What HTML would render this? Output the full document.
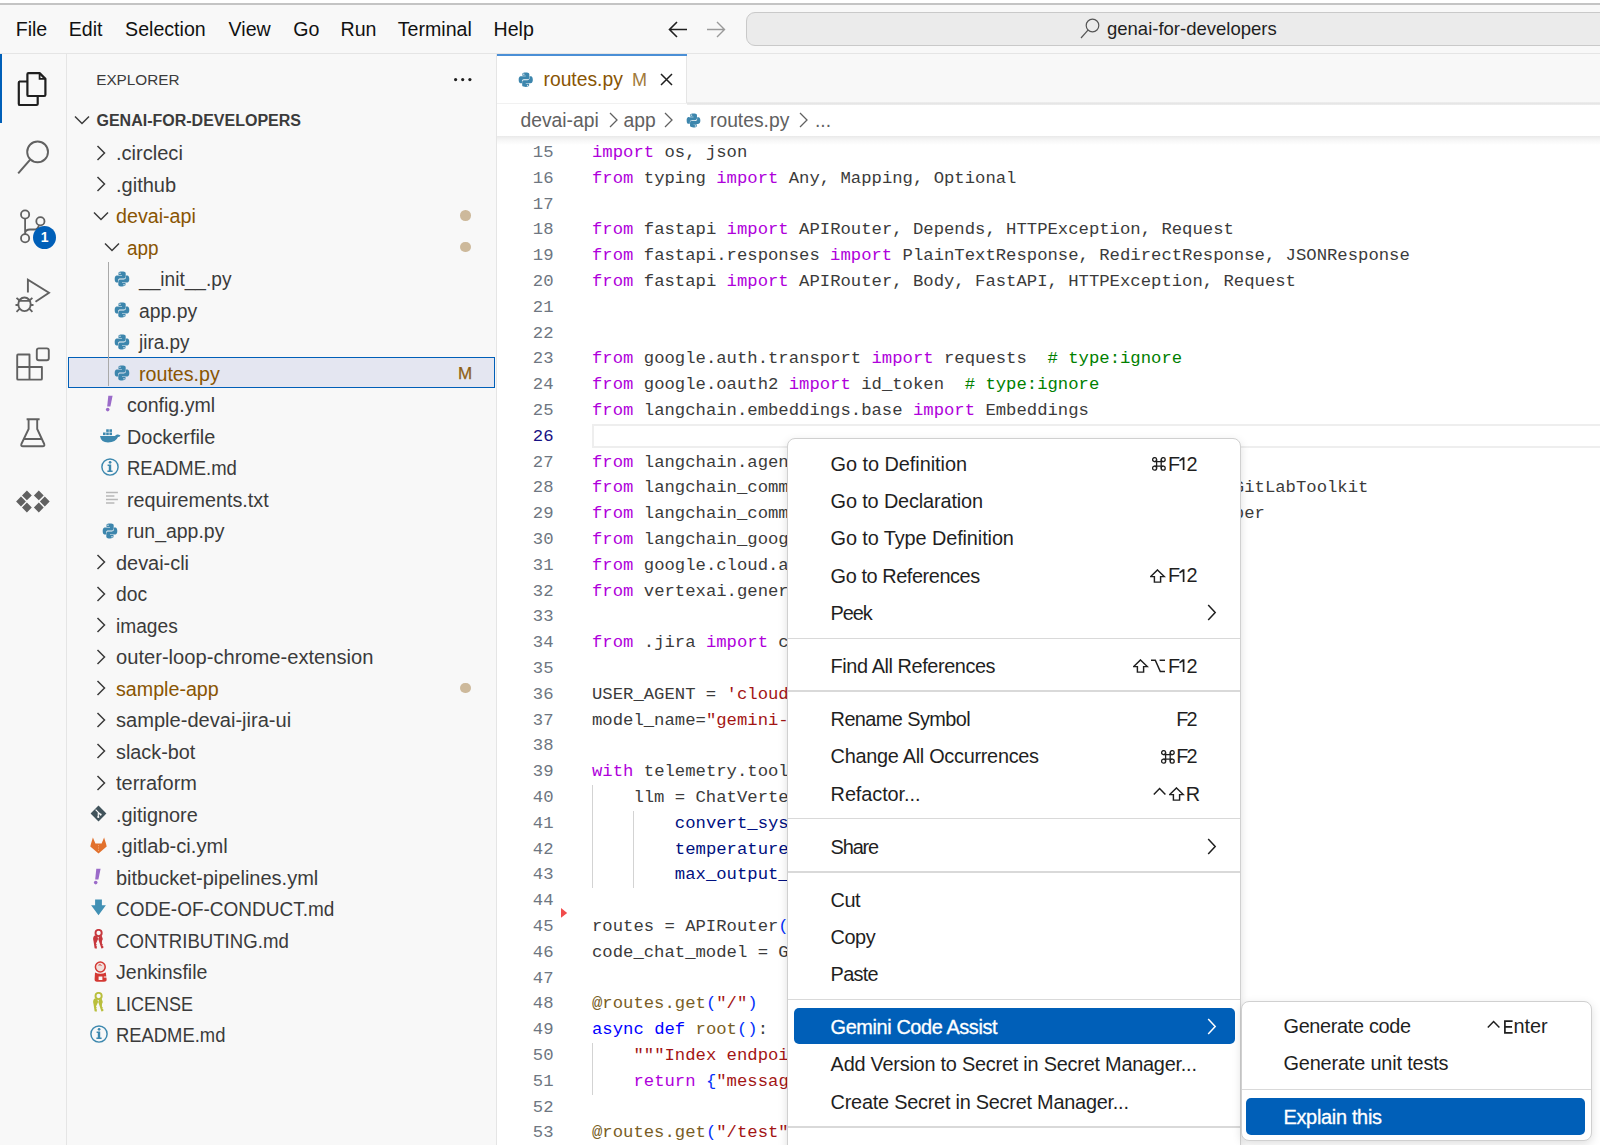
<!DOCTYPE html><html><head><meta charset="utf-8"><style>
html,body{margin:0;padding:0;width:1600px;height:1145px;overflow:hidden;background:#f8f8f8;position:relative}
div,svg{box-sizing:border-box}
</style></head><body>
<div style="position:absolute;left:0;top:0;width:1600px;height:3px;background:#ffffff"></div>
<div style="position:absolute;left:0;top:3px;width:1600px;height:1.5px;background:#c4c4c4"></div>
<div style="position:absolute;left:0;top:53px;width:1600px;height:1px;background:#e5e5e5"></div>
<div style="position:absolute;left:15.7px;top:19.71px;font-family:'Liberation Sans', sans-serif;font-size:19.6px;line-height:1;height:19.6px;color:#111111;font-weight:normal;letter-spacing:0px;white-space:pre;">File</div>
<div style="position:absolute;left:68.7px;top:19.71px;font-family:'Liberation Sans', sans-serif;font-size:19.6px;line-height:1;height:19.6px;color:#111111;font-weight:normal;letter-spacing:0px;white-space:pre;">Edit</div>
<div style="position:absolute;left:125.10000000000001px;top:19.71px;font-family:'Liberation Sans', sans-serif;font-size:19.6px;line-height:1;height:19.6px;color:#111111;font-weight:normal;letter-spacing:0px;white-space:pre;">Selection</div>
<div style="position:absolute;left:228.6px;top:19.71px;font-family:'Liberation Sans', sans-serif;font-size:19.6px;line-height:1;height:19.6px;color:#111111;font-weight:normal;letter-spacing:0px;white-space:pre;">View</div>
<div style="position:absolute;left:293.2px;top:19.71px;font-family:'Liberation Sans', sans-serif;font-size:19.6px;line-height:1;height:19.6px;color:#111111;font-weight:normal;letter-spacing:0px;white-space:pre;">Go</div>
<div style="position:absolute;left:340.5px;top:19.71px;font-family:'Liberation Sans', sans-serif;font-size:19.6px;line-height:1;height:19.6px;color:#111111;font-weight:normal;letter-spacing:0px;white-space:pre;">Run</div>
<div style="position:absolute;left:397.8px;top:19.71px;font-family:'Liberation Sans', sans-serif;font-size:19.6px;line-height:1;height:19.6px;color:#111111;font-weight:normal;letter-spacing:0px;white-space:pre;">Terminal</div>
<div style="position:absolute;left:493.5px;top:19.71px;font-family:'Liberation Sans', sans-serif;font-size:19.6px;line-height:1;height:19.6px;color:#111111;font-weight:normal;letter-spacing:0px;white-space:pre;">Help</div>
<svg style="position:absolute;left:668px;top:21px" width="20" height="17" viewBox="0 0 20 17"><path d="M9 1 L1.5 8.5 L9 16 M1.5 8.5 H19" fill="none" stroke="#1f1f1f" stroke-width="1.6"/></svg>
<svg style="position:absolute;left:706px;top:21px" width="20" height="17" viewBox="0 0 20 17"><path d="M11 1 L18.5 8.5 L11 16 M18.5 8.5 H1" fill="none" stroke="#9a9a9a" stroke-width="1.4"/></svg>
<div style="position:absolute;left:745.5px;top:11.5px;width:900px;height:34.5px;background:#ebebeb;border:1.3px solid #c9c9c9;border-radius:9px"></div>
<svg style="position:absolute;left:1079px;top:17px" width="22" height="22" viewBox="0 0 22 22"><circle cx="13.5" cy="8.5" r="6.3" fill="none" stroke="#555555" stroke-width="1.2"/><path d="M9.2 12.8 L2 21" stroke="#555555" stroke-width="1.2" fill="none"/></svg>
<div style="position:absolute;left:1107px;top:20.34px;font-family:'Liberation Sans', sans-serif;font-size:18.5px;line-height:1;height:18.5px;color:#1f1f1f;font-weight:normal;letter-spacing:0px;white-space:pre;">genai-for-developers</div>
<div style="position:absolute;left:66px;top:54px;width:1px;height:1091px;background:#e5e5e5"></div>
<div style="position:absolute;left:0;top:54px;width:1.6px;height:69px;background:#005fb8"></div>
<svg style="position:absolute;left:0;top:0" width="66" height="540" viewBox="0 0 66 540">
<path d="M19 81.5 H36.5 Q37.7 81.5 37.7 82.7 V104 Q37.7 105 36.5 105 H19.9 Q18.8 105 18.8 103.9 V82.7 Q18.8 81.5 20 81.5" fill="none" stroke="#1f1f1f" stroke-width="2.2"/>
<path d="M28.5 73.1 H39.6 L45.4 78.9 V94.8 Q45.4 96 44.2 96 H28.5 Q27.4 96 27.4 94.9 V74.2 Q27.4 73.1 28.5 73.1 Z" fill="#f8f8f8" stroke="#1f1f1f" stroke-width="2.2" stroke-linejoin="round"/>
<path d="M39.6 73.5 V78.9 H45" fill="none" stroke="#1f1f1f" stroke-width="1.8"/>
<circle cx="37.6" cy="151.9" r="10.4" fill="none" stroke="#616161" stroke-width="1.9"/>
<path d="M30.2 159.6 L18.2 173.3" stroke="#616161" stroke-width="2" fill="none"/>
<circle cx="25.1" cy="214.5" r="4.1" fill="none" stroke="#616161" stroke-width="1.8"/>
<circle cx="40.4" cy="221.2" r="4.1" fill="none" stroke="#616161" stroke-width="1.8"/>
<circle cx="25.1" cy="238.3" r="4.1" fill="none" stroke="#616161" stroke-width="1.8"/>
<path d="M25.1 218.6 V234.2 M25.1 233 Q25.5 229.5 30 229.5 H34 Q38 229.5 39 225.2" fill="none" stroke="#616161" stroke-width="1.8"/>
<path d="M27.9 292.5 V279.6 L49 292.8 L35.5 301.8" fill="none" stroke="#616161" stroke-width="1.9" stroke-linejoin="miter"/>
<ellipse cx="24.5" cy="304.3" rx="6.2" ry="6.8" fill="none" stroke="#616161" stroke-width="1.9"/>
<path d="M18.5 300.8 H30.5 M16.5 297.8 L19.5 300.5 M32.4 297.8 L29.5 300.5 M16.5 311.8 L19.5 308.8 M32.4 311.8 L29.5 308.8 M15.5 305 H18.3 M30.7 305 H33.5" fill="none" stroke="#616161" stroke-width="1.8"/>
<path d="M18 354.5 Q17.2 354.5 17.2 355.5 V378.7 Q17.2 379.6 18.1 379.6 H41 Q41.9 379.6 41.9 378.7 V367 H29.5 V354.5 Z" fill="none" stroke="#616161" stroke-width="1.9" stroke-linejoin="round"/>
<path d="M17.2 367 H29.5 V379.6" fill="none" stroke="#616161" stroke-width="1.9"/>
<rect x="36.8" y="348.4" width="12" height="11.8" rx="2" fill="none" stroke="#616161" stroke-width="1.9"/>
<path d="M26.6 419.2 H39.6 M28.6 419.2 V429 L21.4 444 Q20.6 446.3 23 446.3 H42.6 Q45 446.3 44.2 444 L37.2 429 V419.2 M24.5 439 H41.5" fill="none" stroke="#616161" stroke-width="1.9" stroke-linejoin="round"/>
<path d="M26.9 490.5 L31.799999999999997 495.4 L26.9 500.29999999999995 L22.0 495.4 Z M21 496.6 L25.9 501.5 L21 506.4 L16.1 501.5 Z M26.9 502.6 L31.799999999999997 507.5 L26.9 512.4 L22.0 507.5 Z M38.8 490.5 L43.699999999999996 495.4 L38.8 500.29999999999995 L33.9 495.4 Z M44.8 496.6 L49.699999999999996 501.5 L44.8 506.4 L39.9 501.5 Z M38.8 502.6 L43.699999999999996 507.5 L38.8 512.4 L33.9 507.5 Z " fill="#616161"/>
</svg>
<div style="position:absolute;left:33.1px;top:226.1px;width:23.2px;height:23.2px;border-radius:50%;background:#005fb8;color:#fff;font-family:'Liberation Sans', sans-serif;font-weight:bold;font-size:14px;line-height:23.2px;text-align:center">1</div>
<div style="position:absolute;left:496px;top:54px;width:1px;height:1091px;background:#e5e5e5"></div>
<div style="position:absolute;left:96.2px;top:71.65px;font-family:'Liberation Sans', sans-serif;font-size:15.3px;line-height:1;height:15.3px;color:#3b3b3b;font-weight:normal;letter-spacing:0px;white-space:pre;">EXPLORER</div>
<svg style="position:absolute;left:450px;top:74px" width="26" height="12" viewBox="0 0 26 12"><circle cx="5.6" cy="5.6" r="1.6" fill="#1f1f1f"/><circle cx="12.7" cy="5.6" r="1.6" fill="#1f1f1f"/><circle cx="19.9" cy="5.6" r="1.6" fill="#1f1f1f"/></svg>
<svg style="position:absolute;left:74px;top:115px" width="16" height="10" viewBox="0 0 16 10"><path d="M1 1.5 L8 8.5 L15 1.5" fill="none" stroke="#3b3b3b" stroke-width="1.5"/></svg>
<div style="position:absolute;left:96.5px;top:112.66px;font-family:'Liberation Sans', sans-serif;font-size:16px;line-height:1;height:16px;color:#3b3b3b;font-weight:bold;letter-spacing:0px;white-space:pre;">GENAI-FOR-DEVELOPERS</div>
<div style="position:absolute;left:67.5px;top:357.2px;width:427.5px;height:30.8px;background:#e4e6f1;border:1.3px solid #005fb8"></div>
<div style="position:absolute;left:108px;top:262.4px;width:1px;height:124px;background:#a9a9a9"></div>
<svg style="position:absolute;left:96.0px;top:144.6px" width="11" height="16" viewBox="0 0 11 16"><path d="M1.5 1 L8.5 8 L1.5 15" fill="none" stroke="#3b3b3b" stroke-width="1.5"/></svg>
<div style="position:absolute;left:115.99787279913762px;top:143.22px;font-family:'Liberation Sans', sans-serif;font-size:20.0px;line-height:1;height:20.0px;color:#3b3b3b;font-weight:normal;letter-spacing:0px;white-space:pre;transform:scaleX(1.0027);transform-origin:0 0;">.circleci</div>
<svg style="position:absolute;left:96.0px;top:176.1px" width="11" height="16" viewBox="0 0 11 16"><path d="M1.5 1 L8.5 8 L1.5 15" fill="none" stroke="#3b3b3b" stroke-width="1.5"/></svg>
<div style="position:absolute;left:115.99899237653298px;top:174.72px;font-family:'Liberation Sans', sans-serif;font-size:20.0px;line-height:1;height:20.0px;color:#3b3b3b;font-weight:normal;letter-spacing:0px;white-space:pre;transform:scaleX(1.0013);transform-origin:0 0;">.github</div>
<svg style="position:absolute;left:92.5px;top:210.6px" width="16" height="10" viewBox="0 0 16 10"><path d="M1 1.5 L8 8.5 L15 1.5" fill="none" stroke="#3b3b3b" stroke-width="1.5"/></svg>
<div style="position:absolute;left:116.01307007355787px;top:206.22px;font-family:'Liberation Sans', sans-serif;font-size:20.0px;line-height:1;height:20.0px;color:#895503;font-weight:normal;letter-spacing:0px;white-space:pre;transform:scaleX(0.9837);transform-origin:0 0;">devai-api</div>
<div style="position:absolute;left:460.3px;top:210.2px;width:10.6px;height:10.6px;border-radius:50%;background:#cdb99b"></div>
<svg style="position:absolute;left:104.1px;top:242.1px" width="16" height="10" viewBox="0 0 16 10"><path d="M1 1.5 L8 8.5 L15 1.5" fill="none" stroke="#3b3b3b" stroke-width="1.5"/></svg>
<div style="position:absolute;left:127.44442251204323px;top:237.72px;font-family:'Liberation Sans', sans-serif;font-size:20.0px;line-height:1;height:20.0px;color:#895503;font-weight:normal;letter-spacing:0px;white-space:pre;transform:scaleX(0.9445);transform-origin:0 0;">app</div>
<div style="position:absolute;left:460.3px;top:241.8px;width:10.6px;height:10.6px;border-radius:50%;background:#cdb99b"></div>
<div style="position:absolute;left:113.5px;top:270.6px"><svg width="16" height="16" viewBox="0 0 16 16"><path d="M7.9 0.6 C4.2 0.6 4.5 2.2 4.5 2.2 V3.9 H8 V4.4 H3.1 C3.1 4.4 0.7 4.1 0.7 7.9 C0.7 11.7 2.8 11.5 2.8 11.5 H4.1 V9.7 C4.1 9.7 4 7.6 6.2 7.6 H9.7 C9.7 7.6 11.7 7.7 11.7 5.6 V2.3 C11.7 2.3 12 0.6 7.9 0.6 Z M6 1.6 A0.65 0.65 0 1 1 6 2.9 A0.65 0.65 0 1 1 6 1.6 Z" fill="#3d86ad"/><path d="M8.1 15.4 C11.8 15.4 11.5 13.8 11.5 13.8 V12.1 H8 V11.6 H12.9 C12.9 11.6 15.3 11.9 15.3 8.1 C15.3 4.3 13.2 4.5 13.2 4.5 H11.9 V6.3 C11.9 6.3 12 8.4 9.8 8.4 H6.3 C6.3 8.4 4.3 8.3 4.3 10.4 V13.7 C4.3 13.7 4 15.4 8.1 15.4 Z M10 14.4 A0.65 0.65 0 1 1 10 13.1 A0.65 0.65 0 1 1 10 14.4 Z" fill="#3d86ad"/></svg></div>
<div style="position:absolute;left:138.63550937212742px;top:269.22px;font-family:'Liberation Sans', sans-serif;font-size:20.0px;line-height:1;height:20.0px;color:#3b3b3b;font-weight:normal;letter-spacing:0px;white-space:pre;transform:scaleX(0.9556);transform-origin:0 0;">__init__.py</div>
<div style="position:absolute;left:113.5px;top:302.1px"><svg width="16" height="16" viewBox="0 0 16 16"><path d="M7.9 0.6 C4.2 0.6 4.5 2.2 4.5 2.2 V3.9 H8 V4.4 H3.1 C3.1 4.4 0.7 4.1 0.7 7.9 C0.7 11.7 2.8 11.5 2.8 11.5 H4.1 V9.7 C4.1 9.7 4 7.6 6.2 7.6 H9.7 C9.7 7.6 11.7 7.7 11.7 5.6 V2.3 C11.7 2.3 12 0.6 7.9 0.6 Z M6 1.6 A0.65 0.65 0 1 1 6 2.9 A0.65 0.65 0 1 1 6 1.6 Z" fill="#3d86ad"/><path d="M8.1 15.4 C11.8 15.4 11.5 13.8 11.5 13.8 V12.1 H8 V11.6 H12.9 C12.9 11.6 15.3 11.9 15.3 8.1 C15.3 4.3 13.2 4.5 13.2 4.5 H11.9 V6.3 C11.9 6.3 12 8.4 9.8 8.4 H6.3 C6.3 8.4 4.3 8.3 4.3 10.4 V13.7 C4.3 13.7 4 15.4 8.1 15.4 Z M10 14.4 A0.65 0.65 0 1 1 10 13.1 A0.65 0.65 0 1 1 10 14.4 Z" fill="#3d86ad"/></svg></div>
<div style="position:absolute;left:138.62596324605627px;top:300.72px;font-family:'Liberation Sans', sans-serif;font-size:20.0px;line-height:1;height:20.0px;color:#3b3b3b;font-weight:normal;letter-spacing:0px;white-space:pre;transform:scaleX(0.9675);transform-origin:0 0;">app.py</div>
<div style="position:absolute;left:113.5px;top:333.6px"><svg width="16" height="16" viewBox="0 0 16 16"><path d="M7.9 0.6 C4.2 0.6 4.5 2.2 4.5 2.2 V3.9 H8 V4.4 H3.1 C3.1 4.4 0.7 4.1 0.7 7.9 C0.7 11.7 2.8 11.5 2.8 11.5 H4.1 V9.7 C4.1 9.7 4 7.6 6.2 7.6 H9.7 C9.7 7.6 11.7 7.7 11.7 5.6 V2.3 C11.7 2.3 12 0.6 7.9 0.6 Z M6 1.6 A0.65 0.65 0 1 1 6 2.9 A0.65 0.65 0 1 1 6 1.6 Z" fill="#3d86ad"/><path d="M8.1 15.4 C11.8 15.4 11.5 13.8 11.5 13.8 V12.1 H8 V11.6 H12.9 C12.9 11.6 15.3 11.9 15.3 8.1 C15.3 4.3 13.2 4.5 13.2 4.5 H11.9 V6.3 C11.9 6.3 12 8.4 9.8 8.4 H6.3 C6.3 8.4 4.3 8.3 4.3 10.4 V13.7 C4.3 13.7 4 15.4 8.1 15.4 Z M10 14.4 A0.65 0.65 0 1 1 10 13.1 A0.65 0.65 0 1 1 10 14.4 Z" fill="#3d86ad"/></svg></div>
<div style="position:absolute;left:138.64341682538543px;top:332.22px;font-family:'Liberation Sans', sans-serif;font-size:20.0px;line-height:1;height:20.0px;color:#3b3b3b;font-weight:normal;letter-spacing:0px;white-space:pre;transform:scaleX(0.9457);transform-origin:0 0;">jira.py</div>
<div style="position:absolute;left:113.5px;top:365.1px"><svg width="16" height="16" viewBox="0 0 16 16"><path d="M7.9 0.6 C4.2 0.6 4.5 2.2 4.5 2.2 V3.9 H8 V4.4 H3.1 C3.1 4.4 0.7 4.1 0.7 7.9 C0.7 11.7 2.8 11.5 2.8 11.5 H4.1 V9.7 C4.1 9.7 4 7.6 6.2 7.6 H9.7 C9.7 7.6 11.7 7.7 11.7 5.6 V2.3 C11.7 2.3 12 0.6 7.9 0.6 Z M6 1.6 A0.65 0.65 0 1 1 6 2.9 A0.65 0.65 0 1 1 6 1.6 Z" fill="#3d86ad"/><path d="M8.1 15.4 C11.8 15.4 11.5 13.8 11.5 13.8 V12.1 H8 V11.6 H12.9 C12.9 11.6 15.3 11.9 15.3 8.1 C15.3 4.3 13.2 4.5 13.2 4.5 H11.9 V6.3 C11.9 6.3 12 8.4 9.8 8.4 H6.3 C6.3 8.4 4.3 8.3 4.3 10.4 V13.7 C4.3 13.7 4 15.4 8.1 15.4 Z M10 14.4 A0.65 0.65 0 1 1 10 13.1 A0.65 0.65 0 1 1 10 14.4 Z" fill="#3d86ad"/></svg></div>
<div style="position:absolute;left:138.61442799461642px;top:363.72px;font-family:'Liberation Sans', sans-serif;font-size:20.0px;line-height:1;height:20.0px;color:#895503;font-weight:normal;letter-spacing:0px;white-space:pre;transform:scaleX(0.9820);transform-origin:0 0;">routes.py</div>
<div style="position:absolute;left:458px;top:364.66px;font-family:'Liberation Sans', sans-serif;font-size:17px;line-height:1;height:17px;color:#8f5f14;font-weight:normal;letter-spacing:0px;white-space:pre;-webkit-text-stroke:0.25px #8f5f14;">M</div>
<svg style="position:absolute;left:103.9px;top:395.1px" width="10" height="18" viewBox="0 0 10 18"><path d="M4.3 0.8 H8.6 L6.4 11.6 H3.2 Z" fill="#9b6bc9"/><circle cx="3.7" cy="14.6" r="1.8" fill="#9b6bc9"/></svg>
<div style="position:absolute;left:127.41684137089037px;top:395.22px;font-family:'Liberation Sans', sans-serif;font-size:20.0px;line-height:1;height:20.0px;color:#3b3b3b;font-weight:normal;letter-spacing:0px;white-space:pre;transform:scaleX(0.9789);transform-origin:0 0;">config.yml</div>
<svg style="position:absolute;left:99.4px;top:428.1px" width="22" height="16" viewBox="0 0 22 16"><path d="M1 8 H16 Q17 6 19 6.5 Q21 7 21.5 7.5 Q20.5 9 19 9 Q17 14 9 14.5 Q2 14.5 1 8 Z" fill="#3d88ae"/><rect x="4" y="4.5" width="2.6" height="2.6" fill="#3d88ae"/><rect x="7.2" y="4.5" width="2.6" height="2.6" fill="#3d88ae"/><rect x="10.4" y="4.5" width="2.6" height="2.6" fill="#3d88ae"/><rect x="7.2" y="1.3" width="2.6" height="2.6" fill="#3d88ae"/><rect x="10.4" y="1.3" width="2.6" height="2.6" fill="#3d88ae"/></svg>
<div style="position:absolute;left:127.40540333704115px;top:426.72px;font-family:'Liberation Sans', sans-serif;font-size:20.0px;line-height:1;height:20.0px;color:#3b3b3b;font-weight:normal;letter-spacing:0px;white-space:pre;transform:scaleX(0.9932);transform-origin:0 0;">Dockerfile</div>
<svg style="position:absolute;left:100.2px;top:457.2px" width="20" height="20" viewBox="0 0 20 20"><circle cx="10" cy="10" r="8.1" fill="none" stroke="#3d88ae" stroke-width="1.45"/><circle cx="10.1" cy="5.3" r="1.35" fill="#3d88ae"/><path d="M7.6 7.6 H11.2 V13.6 H12.6 V14.9 H7.4 V13.6 H8.8 V8.9 H7.6 Z" fill="#3d88ae"/></svg>
<div style="position:absolute;left:127.46085260816483px;top:458.22px;font-family:'Liberation Sans', sans-serif;font-size:20.0px;line-height:1;height:20.0px;color:#3b3b3b;font-weight:normal;letter-spacing:0px;white-space:pre;transform:scaleX(0.9239);transform-origin:0 0;">README.md</div>
<svg style="position:absolute;left:106.0px;top:491.1px" width="14" height="14" viewBox="0 0 14 14"><path d="M0 1.5 H11.9 M0 5 H8.4 M0 8.5 H11.9 M0 12 H8.4" stroke="#b8b8b8" stroke-width="1.3"/></svg>
<div style="position:absolute;left:127.40970108026801px;top:489.72px;font-family:'Liberation Sans', sans-serif;font-size:20.0px;line-height:1;height:20.0px;color:#3b3b3b;font-weight:normal;letter-spacing:0px;white-space:pre;transform:scaleX(0.9879);transform-origin:0 0;">requirements.txt</div>
<div style="position:absolute;left:101.9px;top:522.5px"><svg width="16" height="16" viewBox="0 0 16 16"><path d="M7.9 0.6 C4.2 0.6 4.5 2.2 4.5 2.2 V3.9 H8 V4.4 H3.1 C3.1 4.4 0.7 4.1 0.7 7.9 C0.7 11.7 2.8 11.5 2.8 11.5 H4.1 V9.7 C4.1 9.7 4 7.6 6.2 7.6 H9.7 C9.7 7.6 11.7 7.7 11.7 5.6 V2.3 C11.7 2.3 12 0.6 7.9 0.6 Z M6 1.6 A0.65 0.65 0 1 1 6 2.9 A0.65 0.65 0 1 1 6 1.6 Z" fill="#3d86ad"/><path d="M8.1 15.4 C11.8 15.4 11.5 13.8 11.5 13.8 V12.1 H8 V11.6 H12.9 C12.9 11.6 15.3 11.9 15.3 8.1 C15.3 4.3 13.2 4.5 13.2 4.5 H11.9 V6.3 C11.9 6.3 12 8.4 9.8 8.4 H6.3 C6.3 8.4 4.3 8.3 4.3 10.4 V13.7 C4.3 13.7 4 15.4 8.1 15.4 Z M10 14.4 A0.65 0.65 0 1 1 10 13.1 A0.65 0.65 0 1 1 10 14.4 Z" fill="#3d86ad"/></svg></div>
<div style="position:absolute;left:127.42162434947168px;top:521.22px;font-family:'Liberation Sans', sans-serif;font-size:20.0px;line-height:1;height:20.0px;color:#3b3b3b;font-weight:normal;letter-spacing:0px;white-space:pre;transform:scaleX(0.9730);transform-origin:0 0;">run_app.py</div>
<svg style="position:absolute;left:96.0px;top:554.0px" width="11" height="16" viewBox="0 0 11 16"><path d="M1.5 1 L8.5 8 L1.5 15" fill="none" stroke="#3b3b3b" stroke-width="1.5"/></svg>
<div style="position:absolute;left:116.00346717381404px;top:552.72px;font-family:'Liberation Sans', sans-serif;font-size:20.0px;line-height:1;height:20.0px;color:#3b3b3b;font-weight:normal;letter-spacing:0px;white-space:pre;transform:scaleX(0.9957);transform-origin:0 0;">devai-cli</div>
<svg style="position:absolute;left:96.0px;top:585.5px" width="11" height="16" viewBox="0 0 11 16"><path d="M1.5 1 L8.5 8 L1.5 15" fill="none" stroke="#3b3b3b" stroke-width="1.5"/></svg>
<div style="position:absolute;left:116.02843367655966px;top:584.22px;font-family:'Liberation Sans', sans-serif;font-size:20.0px;line-height:1;height:20.0px;color:#3b3b3b;font-weight:normal;letter-spacing:0px;white-space:pre;transform:scaleX(0.9645);transform-origin:0 0;">doc</div>
<svg style="position:absolute;left:96.0px;top:617.0px" width="11" height="16" viewBox="0 0 11 16"><path d="M1.5 1 L8.5 8 L1.5 15" fill="none" stroke="#3b3b3b" stroke-width="1.5"/></svg>
<div style="position:absolute;left:116.03368576527787px;top:615.72px;font-family:'Liberation Sans', sans-serif;font-size:20.0px;line-height:1;height:20.0px;color:#3b3b3b;font-weight:normal;letter-spacing:0px;white-space:pre;transform:scaleX(0.9579);transform-origin:0 0;">images</div>
<svg style="position:absolute;left:96.0px;top:648.5px" width="11" height="16" viewBox="0 0 11 16"><path d="M1.5 1 L8.5 8 L1.5 15" fill="none" stroke="#3b3b3b" stroke-width="1.5"/></svg>
<div style="position:absolute;left:115.99453347143898px;top:647.22px;font-family:'Liberation Sans', sans-serif;font-size:20.0px;line-height:1;height:20.0px;color:#3b3b3b;font-weight:normal;letter-spacing:0px;white-space:pre;transform:scaleX(1.0068);transform-origin:0 0;">outer-loop-chrome-extension</div>
<svg style="position:absolute;left:96.0px;top:680.0px" width="11" height="16" viewBox="0 0 11 16"><path d="M1.5 1 L8.5 8 L1.5 15" fill="none" stroke="#3b3b3b" stroke-width="1.5"/></svg>
<div style="position:absolute;left:116.01363422027619px;top:678.72px;font-family:'Liberation Sans', sans-serif;font-size:20.0px;line-height:1;height:20.0px;color:#895503;font-weight:normal;letter-spacing:0px;white-space:pre;transform:scaleX(0.9830);transform-origin:0 0;">sample-app</div>
<div style="position:absolute;left:460.3px;top:682.8px;width:10.6px;height:10.6px;border-radius:50%;background:#cdb99b"></div>
<svg style="position:absolute;left:96.0px;top:711.5px" width="11" height="16" viewBox="0 0 11 16"><path d="M1.5 1 L8.5 8 L1.5 15" fill="none" stroke="#3b3b3b" stroke-width="1.5"/></svg>
<div style="position:absolute;left:115.99705199847394px;top:710.22px;font-family:'Liberation Sans', sans-serif;font-size:20.0px;line-height:1;height:20.0px;color:#3b3b3b;font-weight:normal;letter-spacing:0px;white-space:pre;transform:scaleX(1.0037);transform-origin:0 0;">sample-devai-jira-ui</div>
<svg style="position:absolute;left:96.0px;top:743.0px" width="11" height="16" viewBox="0 0 11 16"><path d="M1.5 1 L8.5 8 L1.5 15" fill="none" stroke="#3b3b3b" stroke-width="1.5"/></svg>
<div style="position:absolute;left:116.00768118052521px;top:741.72px;font-family:'Liberation Sans', sans-serif;font-size:20.0px;line-height:1;height:20.0px;color:#3b3b3b;font-weight:normal;letter-spacing:0px;white-space:pre;transform:scaleX(0.9904);transform-origin:0 0;">slack-bot</div>
<svg style="position:absolute;left:96.0px;top:774.5px" width="11" height="16" viewBox="0 0 11 16"><path d="M1.5 1 L8.5 8 L1.5 15" fill="none" stroke="#3b3b3b" stroke-width="1.5"/></svg>
<div style="position:absolute;left:116.00161953540307px;top:773.22px;font-family:'Liberation Sans', sans-serif;font-size:20.0px;line-height:1;height:20.0px;color:#3b3b3b;font-weight:normal;letter-spacing:0px;white-space:pre;transform:scaleX(0.9980);transform-origin:0 0;">terraform</div>
<svg style="position:absolute;left:89.8px;top:805.2px" width="17" height="17" viewBox="0 0 17 17"><path d="M8.5 0.6 L16.4 8.5 L8.5 16.4 L0.6 8.5 Z" fill="#41535b"/><path d="M5.6 4.6 L10.6 9.6 M8.3 7.3 V12" stroke="#f8f8f8" stroke-width="1.2"/><circle cx="8.3" cy="12" r="1.1" fill="#f8f8f8"/><circle cx="10.6" cy="9.6" r="1.1" fill="#f8f8f8"/></svg>
<div style="position:absolute;left:116.00544500601684px;top:804.72px;font-family:'Liberation Sans', sans-serif;font-size:20.0px;line-height:1;height:20.0px;color:#3b3b3b;font-weight:normal;letter-spacing:0px;white-space:pre;transform:scaleX(0.9932);transform-origin:0 0;">.gitignore</div>
<svg style="position:absolute;left:89.8px;top:836.8px" width="17" height="17" viewBox="0 0 17 17"><path d="M8.5 16.6 L0.3 9.6 L0.9 7 L2.9 0.6 L5.4 6.4 H11.6 L14.1 0.6 L16.1 7 L16.7 9.6 Z" fill="#e2712d"/><path d="M8.5 8 V15" stroke="#f4b080" stroke-width="0.8" stroke-dasharray="1.2 1.2"/></svg>
<div style="position:absolute;left:115.99627641957942px;top:836.22px;font-family:'Liberation Sans', sans-serif;font-size:20.0px;line-height:1;height:20.0px;color:#3b3b3b;font-weight:normal;letter-spacing:0px;white-space:pre;transform:scaleX(1.0047);transform-origin:0 0;">.gitlab-ci.yml</div>
<svg style="position:absolute;left:92.3px;top:867.5px" width="10" height="18" viewBox="0 0 10 18"><path d="M4.3 0.8 H8.6 L6.4 11.6 H3.2 Z" fill="#9b6bc9"/><circle cx="3.7" cy="14.6" r="1.8" fill="#9b6bc9"/></svg>
<div style="position:absolute;left:116.0002831417848px;top:867.72px;font-family:'Liberation Sans', sans-serif;font-size:20.0px;line-height:1;height:20.0px;color:#3b3b3b;font-weight:normal;letter-spacing:0px;white-space:pre;transform:scaleX(0.9996);transform-origin:0 0;">bitbucket-pipelines.yml</div>
<svg style="position:absolute;left:90.6px;top:899.0px" width="16" height="17" viewBox="0 0 16 17"><path d="M4.1 0.5 H10.9 V6.2 H14.9 L7.5 16.2 L0.1 6.2 H4.1 Z" fill="#4190b4"/></svg>
<div style="position:absolute;left:116.04061027873966px;top:899.22px;font-family:'Liberation Sans', sans-serif;font-size:20.0px;line-height:1;height:20.0px;color:#3b3b3b;font-weight:normal;letter-spacing:0px;white-space:pre;transform:scaleX(0.9492);transform-origin:0 0;">CODE-OF-CONDUCT.md</div>
<svg style="position:absolute;left:92.3px;top:929.3px" width="13" height="21" viewBox="0 0 13 21"><circle cx="6.6" cy="4" r="3.1" fill="none" stroke="#c7383d" stroke-width="1.9"/><path d="M2.6 6.5 Q0.3 8.5 1.5 12 L2.6 19.3 L4.6 19.8 L5 17.6 L4 17 L4.8 15.8 L4 14.5 L5.1 12.2 Q6.8 9.5 5.3 7 Z" fill="#c7383d"/><path d="M7.2 7.2 Q5.6 9.6 7 12.3 L9.4 19.6 L11.4 19.1 L11.2 17 L10.3 16.8 L10.8 15.5 L9.9 14.6 L10 12 Q11.4 9.5 9.8 7 Z" fill="#c7383d"/></svg>
<div style="position:absolute;left:116.05509827722055px;top:930.72px;font-family:'Liberation Sans', sans-serif;font-size:20.0px;line-height:1;height:20.0px;color:#3b3b3b;font-weight:normal;letter-spacing:0px;white-space:pre;transform:scaleX(0.9311);transform-origin:0 0;">CONTRIBUTING.md</div>
<svg style="position:absolute;left:94.3px;top:960.5px" width="14" height="22" viewBox="0 0 14 22"><circle cx="6.3" cy="6" r="4.9" fill="#f1e0dc" stroke="#d33833" stroke-width="1.5"/><path d="M4.5 4.2 Q6 3 7.5 4.5" stroke="#d33833" stroke-width="1" fill="none"/><path d="M1 11.5 Q6.5 14 11.8 11.5 L12.6 18 Q13 20.8 10 20.8 H3 Q0.4 20.8 0.6 18 Z" fill="#d33833"/><path d="M4.6 15.5 H8.4 V19 H4.6 Z" fill="#f8f8f8"/><path d="M9.8 16 H12.9" stroke="#f8f8f8" stroke-width="1"/></svg>
<div style="position:absolute;left:116.01677843634155px;top:962.22px;font-family:'Liberation Sans', sans-serif;font-size:20.0px;line-height:1;height:20.0px;color:#3b3b3b;font-weight:normal;letter-spacing:0px;white-space:pre;transform:scaleX(0.9790);transform-origin:0 0;">Jenkinsfile</div>
<svg style="position:absolute;left:92.3px;top:992.3px" width="13" height="21" viewBox="0 0 13 21"><circle cx="6.6" cy="4" r="3.1" fill="none" stroke="#b9bf3c" stroke-width="1.9"/><path d="M2.6 6.5 Q0.3 8.5 1.5 12 L2.6 19.3 L4.6 19.8 L5 17.6 L4 17 L4.8 15.8 L4 14.5 L5.1 12.2 Q6.8 9.5 5.3 7 Z" fill="#b9bf3c"/><path d="M7.2 7.2 Q5.6 9.6 7 12.3 L9.4 19.6 L11.4 19.1 L11.2 17 L10.3 16.8 L10.8 15.5 L9.9 14.6 L10 12 Q11.4 9.5 9.8 7 Z" fill="#b9bf3c"/></svg>
<div style="position:absolute;left:116.08px;top:993.72px;font-family:'Liberation Sans', sans-serif;font-size:20.0px;line-height:1;height:20.0px;color:#3b3b3b;font-weight:normal;letter-spacing:0px;white-space:pre;transform:scaleX(0.9000);transform-origin:0 0;">LICENSE</div>
<svg style="position:absolute;left:88.6px;top:1024.2px" width="20" height="20" viewBox="0 0 20 20"><circle cx="10" cy="10" r="8.1" fill="none" stroke="#3d88ae" stroke-width="1.45"/><circle cx="10.1" cy="5.3" r="1.35" fill="#3d88ae"/><path d="M7.6 7.6 H11.2 V13.6 H12.6 V14.9 H7.4 V13.6 H8.8 V8.9 H7.6 Z" fill="#3d88ae"/></svg>
<div style="position:absolute;left:116.06427775826602px;top:1025.22px;font-family:'Liberation Sans', sans-serif;font-size:20.0px;line-height:1;height:20.0px;color:#3b3b3b;font-weight:normal;letter-spacing:0px;white-space:pre;transform:scaleX(0.9197);transform-origin:0 0;">README.md</div>
<div style="position:absolute;left:497px;top:104px;width:1103px;height:1041px;background:#ffffff"></div>
<div style="position:absolute;left:687px;top:102.4px;width:913px;height:2.2px;background:linear-gradient(#eeeeee,#e6e6e6 50%,#eeeeee)"></div>
<div style="position:absolute;left:497px;top:54px;width:190px;height:50px;background:#ffffff;border-right:1px solid #e5e5e5"></div>
<div style="position:absolute;left:497px;top:54px;width:190px;height:1.7px;background:#4a8fd6"></div>
<div style="position:absolute;left:517.5px;top:71.5px"><svg width="15.5" height="15.5" viewBox="0 0 16 16"><path d="M7.9 0.6 C4.2 0.6 4.5 2.2 4.5 2.2 V3.9 H8 V4.4 H3.1 C3.1 4.4 0.7 4.1 0.7 7.9 C0.7 11.7 2.8 11.5 2.8 11.5 H4.1 V9.7 C4.1 9.7 4 7.6 6.2 7.6 H9.7 C9.7 7.6 11.7 7.7 11.7 5.6 V2.3 C11.7 2.3 12 0.6 7.9 0.6 Z M6 1.6 A0.65 0.65 0 1 1 6 2.9 A0.65 0.65 0 1 1 6 1.6 Z" fill="#3d86ad"/><path d="M8.1 15.4 C11.8 15.4 11.5 13.8 11.5 13.8 V12.1 H8 V11.6 H12.9 C12.9 11.6 15.3 11.9 15.3 8.1 C15.3 4.3 13.2 4.5 13.2 4.5 H11.9 V6.3 C11.9 6.3 12 8.4 9.8 8.4 H6.3 C6.3 8.4 4.3 8.3 4.3 10.4 V13.7 C4.3 13.7 4 15.4 8.1 15.4 Z M10 14.4 A0.65 0.65 0 1 1 10 13.1 A0.65 0.65 0 1 1 10 14.4 Z" fill="#3d86ad"/></svg></div>
<div style="position:absolute;left:543.5px;top:70.46px;font-family:'Liberation Sans', sans-serif;font-size:19.3px;line-height:1;height:19.3px;color:#895503;font-weight:normal;letter-spacing:0px;white-space:pre;">routes.py</div>
<div style="position:absolute;left:632px;top:71.26px;font-family:'Liberation Sans', sans-serif;font-size:18px;line-height:1;height:18px;color:#a27b3a;font-weight:normal;letter-spacing:0px;white-space:pre;">M</div>
<div style="position:absolute;left:497px;top:103.3px;width:190px;height:1px;background:#f1f1f1"></div>
<svg style="position:absolute;left:660px;top:73px" width="13" height="13" viewBox="0 0 13 13"><path d="M1 1 L12 12 M12 1 L1 12" stroke="#1f1f1f" stroke-width="1.5"/></svg>
<div style="position:absolute;left:520.5px;top:110.66px;font-family:'Liberation Sans', sans-serif;font-size:19.3px;line-height:1;height:19.3px;color:#616161;font-weight:normal;letter-spacing:0px;white-space:pre;">devai-api</div>
<svg style="position:absolute;left:608.5px;top:112px" width="9" height="16" viewBox="0 0 9 16"><path d="M1 1 L8 8 L1 15" fill="none" stroke="#616161" stroke-width="1.3"/></svg>
<div style="position:absolute;left:623.5px;top:110.66px;font-family:'Liberation Sans', sans-serif;font-size:19.3px;line-height:1;height:19.3px;color:#616161;font-weight:normal;letter-spacing:0px;white-space:pre;">app</div>
<svg style="position:absolute;left:663.5px;top:112px" width="9" height="16" viewBox="0 0 9 16"><path d="M1 1 L8 8 L1 15" fill="none" stroke="#616161" stroke-width="1.3"/></svg>
<div style="position:absolute;left:685.5px;top:112.5px"><svg width="15" height="15" viewBox="0 0 16 16"><path d="M7.9 0.6 C4.2 0.6 4.5 2.2 4.5 2.2 V3.9 H8 V4.4 H3.1 C3.1 4.4 0.7 4.1 0.7 7.9 C0.7 11.7 2.8 11.5 2.8 11.5 H4.1 V9.7 C4.1 9.7 4 7.6 6.2 7.6 H9.7 C9.7 7.6 11.7 7.7 11.7 5.6 V2.3 C11.7 2.3 12 0.6 7.9 0.6 Z M6 1.6 A0.65 0.65 0 1 1 6 2.9 A0.65 0.65 0 1 1 6 1.6 Z" fill="#3d86ad"/><path d="M8.1 15.4 C11.8 15.4 11.5 13.8 11.5 13.8 V12.1 H8 V11.6 H12.9 C12.9 11.6 15.3 11.9 15.3 8.1 C15.3 4.3 13.2 4.5 13.2 4.5 H11.9 V6.3 C11.9 6.3 12 8.4 9.8 8.4 H6.3 C6.3 8.4 4.3 8.3 4.3 10.4 V13.7 C4.3 13.7 4 15.4 8.1 15.4 Z M10 14.4 A0.65 0.65 0 1 1 10 13.1 A0.65 0.65 0 1 1 10 14.4 Z" fill="#3d86ad"/></svg></div>
<div style="position:absolute;left:710px;top:110.66px;font-family:'Liberation Sans', sans-serif;font-size:19.3px;line-height:1;height:19.3px;color:#616161;font-weight:normal;letter-spacing:0px;white-space:pre;">routes.py</div>
<svg style="position:absolute;left:798.5px;top:112px" width="9" height="16" viewBox="0 0 9 16"><path d="M1 1 L8 8 L1 15" fill="none" stroke="#616161" stroke-width="1.3"/></svg>
<div style="position:absolute;left:815px;top:110.66px;font-family:'Liberation Sans', sans-serif;font-size:19.3px;line-height:1;height:19.3px;color:#616161;font-weight:normal;letter-spacing:0px;white-space:pre;">...</div>
<div style="position:absolute;left:497px;top:135.8px;width:1103px;height:9px;background:linear-gradient(#e9e9e9,#f6f6f6 45%,#ffffff)"></div>
<div style="position:absolute;left:591.6px;top:423.6px;width:1010px;height:24.8px;border:2px solid #eeeeee;border-right:none"></div>
<div style="position:absolute;left:592.0px;top:785.0px;width:1px;height:103.2px;background:#d3d3d3"></div>
<div style="position:absolute;left:633.4px;top:810.8px;width:1px;height:77.4px;background:#d3d3d3"></div>
<div style="position:absolute;left:592.0px;top:1043.0px;width:1px;height:51.6px;background:#d3d3d3"></div>
<div style="position:absolute;left:500px;width:53.5px;text-align:right;top:140.0px;height:25.8px;line-height:25.8px;font-family:'Liberation Mono', monospace;font-size:17.25px;color:#6e7681">15</div>
<div style="position:absolute;left:592px;top:140.0px;height:25.8px;line-height:25.8px;font-family:'Liberation Mono', monospace;font-size:17.25px;white-space:pre;color:#3b3b3b"><span style="color:#af00db">import</span><span style="color:#3b3b3b"> os, json</span></div>
<div style="position:absolute;left:500px;width:53.5px;text-align:right;top:165.8px;height:25.8px;line-height:25.8px;font-family:'Liberation Mono', monospace;font-size:17.25px;color:#6e7681">16</div>
<div style="position:absolute;left:592px;top:165.8px;height:25.8px;line-height:25.8px;font-family:'Liberation Mono', monospace;font-size:17.25px;white-space:pre;color:#3b3b3b"><span style="color:#af00db">from</span><span style="color:#3b3b3b"> typing </span><span style="color:#af00db">import</span><span style="color:#3b3b3b"> Any, Mapping, Optional</span></div>
<div style="position:absolute;left:500px;width:53.5px;text-align:right;top:191.6px;height:25.8px;line-height:25.8px;font-family:'Liberation Mono', monospace;font-size:17.25px;color:#6e7681">17</div>
<div style="position:absolute;left:500px;width:53.5px;text-align:right;top:217.4px;height:25.8px;line-height:25.8px;font-family:'Liberation Mono', monospace;font-size:17.25px;color:#6e7681">18</div>
<div style="position:absolute;left:592px;top:217.4px;height:25.8px;line-height:25.8px;font-family:'Liberation Mono', monospace;font-size:17.25px;white-space:pre;color:#3b3b3b"><span style="color:#af00db">from</span><span style="color:#3b3b3b"> fastapi </span><span style="color:#af00db">import</span><span style="color:#3b3b3b"> APIRouter, Depends, HTTPException, Request</span></div>
<div style="position:absolute;left:500px;width:53.5px;text-align:right;top:243.2px;height:25.8px;line-height:25.8px;font-family:'Liberation Mono', monospace;font-size:17.25px;color:#6e7681">19</div>
<div style="position:absolute;left:592px;top:243.2px;height:25.8px;line-height:25.8px;font-family:'Liberation Mono', monospace;font-size:17.25px;white-space:pre;color:#3b3b3b"><span style="color:#af00db">from</span><span style="color:#3b3b3b"> fastapi.responses </span><span style="color:#af00db">import</span><span style="color:#3b3b3b"> PlainTextResponse, RedirectResponse, JSONResponse</span></div>
<div style="position:absolute;left:500px;width:53.5px;text-align:right;top:269.0px;height:25.8px;line-height:25.8px;font-family:'Liberation Mono', monospace;font-size:17.25px;color:#6e7681">20</div>
<div style="position:absolute;left:592px;top:269.0px;height:25.8px;line-height:25.8px;font-family:'Liberation Mono', monospace;font-size:17.25px;white-space:pre;color:#3b3b3b"><span style="color:#af00db">from</span><span style="color:#3b3b3b"> fastapi </span><span style="color:#af00db">import</span><span style="color:#3b3b3b"> APIRouter, Body, FastAPI, HTTPException, Request</span></div>
<div style="position:absolute;left:500px;width:53.5px;text-align:right;top:294.8px;height:25.8px;line-height:25.8px;font-family:'Liberation Mono', monospace;font-size:17.25px;color:#6e7681">21</div>
<div style="position:absolute;left:500px;width:53.5px;text-align:right;top:320.6px;height:25.8px;line-height:25.8px;font-family:'Liberation Mono', monospace;font-size:17.25px;color:#6e7681">22</div>
<div style="position:absolute;left:500px;width:53.5px;text-align:right;top:346.4px;height:25.8px;line-height:25.8px;font-family:'Liberation Mono', monospace;font-size:17.25px;color:#6e7681">23</div>
<div style="position:absolute;left:592px;top:346.4px;height:25.8px;line-height:25.8px;font-family:'Liberation Mono', monospace;font-size:17.25px;white-space:pre;color:#3b3b3b"><span style="color:#af00db">from</span><span style="color:#3b3b3b"> google.auth.transport </span><span style="color:#af00db">import</span><span style="color:#3b3b3b"> requests  </span><span style="color:#008000"># type:ignore</span></div>
<div style="position:absolute;left:500px;width:53.5px;text-align:right;top:372.2px;height:25.8px;line-height:25.8px;font-family:'Liberation Mono', monospace;font-size:17.25px;color:#6e7681">24</div>
<div style="position:absolute;left:592px;top:372.2px;height:25.8px;line-height:25.8px;font-family:'Liberation Mono', monospace;font-size:17.25px;white-space:pre;color:#3b3b3b"><span style="color:#af00db">from</span><span style="color:#3b3b3b"> google.oauth2 </span><span style="color:#af00db">import</span><span style="color:#3b3b3b"> id_token  </span><span style="color:#008000"># type:ignore</span></div>
<div style="position:absolute;left:500px;width:53.5px;text-align:right;top:398.0px;height:25.8px;line-height:25.8px;font-family:'Liberation Mono', monospace;font-size:17.25px;color:#6e7681">25</div>
<div style="position:absolute;left:592px;top:398.0px;height:25.8px;line-height:25.8px;font-family:'Liberation Mono', monospace;font-size:17.25px;white-space:pre;color:#3b3b3b"><span style="color:#af00db">from</span><span style="color:#3b3b3b"> langchain.embeddings.base </span><span style="color:#af00db">import</span><span style="color:#3b3b3b"> Embeddings</span></div>
<div style="position:absolute;left:500px;width:53.5px;text-align:right;top:423.8px;height:25.8px;line-height:25.8px;font-family:'Liberation Mono', monospace;font-size:17.25px;color:#171184">26</div>
<div style="position:absolute;left:500px;width:53.5px;text-align:right;top:449.6px;height:25.8px;line-height:25.8px;font-family:'Liberation Mono', monospace;font-size:17.25px;color:#6e7681">27</div>
<div style="position:absolute;left:592px;top:449.6px;height:25.8px;line-height:25.8px;font-family:'Liberation Mono', monospace;font-size:17.25px;white-space:pre;color:#3b3b3b"><span style="color:#af00db">from</span><span style="color:#3b3b3b"> langchain.agents </span><span style="color:#af00db">import</span><span style="color:#3b3b3b"> AgentType</span></div>
<div style="position:absolute;left:500px;width:53.5px;text-align:right;top:475.4px;height:25.8px;line-height:25.8px;font-family:'Liberation Mono', monospace;font-size:17.25px;color:#6e7681">28</div>
<div style="position:absolute;left:592px;top:475.4px;height:25.8px;line-height:25.8px;font-family:'Liberation Mono', monospace;font-size:17.25px;white-space:pre;color:#3b3b3b"><span style="color:#af00db">from</span><span style="color:#3b3b3b"> langchain_community.agent_toolkits.gitlab.toolkit </span><span style="color:#af00db">import</span><span style="color:#3b3b3b"> GitLabToolkit</span></div>
<div style="position:absolute;left:500px;width:53.5px;text-align:right;top:501.2px;height:25.8px;line-height:25.8px;font-family:'Liberation Mono', monospace;font-size:17.25px;color:#6e7681">29</div>
<div style="position:absolute;left:592px;top:501.2px;height:25.8px;line-height:25.8px;font-family:'Liberation Mono', monospace;font-size:17.25px;white-space:pre;color:#3b3b3b"><span style="color:#af00db">from</span><span style="color:#3b3b3b"> langchain_community.utilities.gitlab </span><span style="color:#af00db">import</span><span style="color:#3b3b3b"> GitLabAPIWrapper</span></div>
<div style="position:absolute;left:500px;width:53.5px;text-align:right;top:527.0px;height:25.8px;line-height:25.8px;font-family:'Liberation Mono', monospace;font-size:17.25px;color:#6e7681">30</div>
<div style="position:absolute;left:592px;top:527.0px;height:25.8px;line-height:25.8px;font-family:'Liberation Mono', monospace;font-size:17.25px;white-space:pre;color:#3b3b3b"><span style="color:#af00db">from</span><span style="color:#3b3b3b"> langchain_google_vertexai </span><span style="color:#af00db">import</span><span style="color:#3b3b3b"> ChatVertexAI</span></div>
<div style="position:absolute;left:500px;width:53.5px;text-align:right;top:552.8px;height:25.8px;line-height:25.8px;font-family:'Liberation Mono', monospace;font-size:17.25px;color:#6e7681">31</div>
<div style="position:absolute;left:592px;top:552.8px;height:25.8px;line-height:25.8px;font-family:'Liberation Mono', monospace;font-size:17.25px;white-space:pre;color:#3b3b3b"><span style="color:#af00db">from</span><span style="color:#3b3b3b"> google.cloud.aiplatform </span><span style="color:#af00db">import</span><span style="color:#3b3b3b"> telemetry</span></div>
<div style="position:absolute;left:500px;width:53.5px;text-align:right;top:578.6px;height:25.8px;line-height:25.8px;font-family:'Liberation Mono', monospace;font-size:17.25px;color:#6e7681">32</div>
<div style="position:absolute;left:592px;top:578.6px;height:25.8px;line-height:25.8px;font-family:'Liberation Mono', monospace;font-size:17.25px;white-space:pre;color:#3b3b3b"><span style="color:#af00db">from</span><span style="color:#3b3b3b"> vertexai.generative_models </span><span style="color:#af00db">import</span><span style="color:#3b3b3b"> GenerativeModel</span></div>
<div style="position:absolute;left:500px;width:53.5px;text-align:right;top:604.4px;height:25.8px;line-height:25.8px;font-family:'Liberation Mono', monospace;font-size:17.25px;color:#6e7681">33</div>
<div style="position:absolute;left:500px;width:53.5px;text-align:right;top:630.2px;height:25.8px;line-height:25.8px;font-family:'Liberation Mono', monospace;font-size:17.25px;color:#6e7681">34</div>
<div style="position:absolute;left:592px;top:630.2px;height:25.8px;line-height:25.8px;font-family:'Liberation Mono', monospace;font-size:17.25px;white-space:pre;color:#3b3b3b"><span style="color:#af00db">from</span><span style="color:#3b3b3b"> .jira </span><span style="color:#af00db">import</span><span style="color:#3b3b3b"> create_jira_issue</span></div>
<div style="position:absolute;left:500px;width:53.5px;text-align:right;top:656.0px;height:25.8px;line-height:25.8px;font-family:'Liberation Mono', monospace;font-size:17.25px;color:#6e7681">35</div>
<div style="position:absolute;left:500px;width:53.5px;text-align:right;top:681.8px;height:25.8px;line-height:25.8px;font-family:'Liberation Mono', monospace;font-size:17.25px;color:#6e7681">36</div>
<div style="position:absolute;left:592px;top:681.8px;height:25.8px;line-height:25.8px;font-family:'Liberation Mono', monospace;font-size:17.25px;white-space:pre;color:#3b3b3b"><span style="color:#3b3b3b">USER_AGENT = </span><span style="color:#a31515">&#x27;cloud-solutions/genai-for-developers-v1&#x27;</span></div>
<div style="position:absolute;left:500px;width:53.5px;text-align:right;top:707.6px;height:25.8px;line-height:25.8px;font-family:'Liberation Mono', monospace;font-size:17.25px;color:#6e7681">37</div>
<div style="position:absolute;left:592px;top:707.6px;height:25.8px;line-height:25.8px;font-family:'Liberation Mono', monospace;font-size:17.25px;white-space:pre;color:#3b3b3b"><span style="color:#3b3b3b">model_name=</span><span style="color:#a31515">&quot;gemini-1.5-pro&quot;</span></div>
<div style="position:absolute;left:500px;width:53.5px;text-align:right;top:733.4px;height:25.8px;line-height:25.8px;font-family:'Liberation Mono', monospace;font-size:17.25px;color:#6e7681">38</div>
<div style="position:absolute;left:500px;width:53.5px;text-align:right;top:759.2px;height:25.8px;line-height:25.8px;font-family:'Liberation Mono', monospace;font-size:17.25px;color:#6e7681">39</div>
<div style="position:absolute;left:592px;top:759.2px;height:25.8px;line-height:25.8px;font-family:'Liberation Mono', monospace;font-size:17.25px;white-space:pre;color:#3b3b3b"><span style="color:#af00db">with</span><span style="color:#3b3b3b"> telemetry.tool_context_manager(USER_AGENT):</span></div>
<div style="position:absolute;left:500px;width:53.5px;text-align:right;top:785.0px;height:25.8px;line-height:25.8px;font-family:'Liberation Mono', monospace;font-size:17.25px;color:#6e7681">40</div>
<div style="position:absolute;left:592px;top:785.0px;height:25.8px;line-height:25.8px;font-family:'Liberation Mono', monospace;font-size:17.25px;white-space:pre;color:#3b3b3b"><span style="color:#3b3b3b">    llm = ChatVertexAI(</span></div>
<div style="position:absolute;left:500px;width:53.5px;text-align:right;top:810.8px;height:25.8px;line-height:25.8px;font-family:'Liberation Mono', monospace;font-size:17.25px;color:#6e7681">41</div>
<div style="position:absolute;left:592px;top:810.8px;height:25.8px;line-height:25.8px;font-family:'Liberation Mono', monospace;font-size:17.25px;white-space:pre;color:#3b3b3b"><span style="color:#3b3b3b">        </span><span style="color:#001080">convert_system_message_to_human</span></div>
<div style="position:absolute;left:500px;width:53.5px;text-align:right;top:836.6px;height:25.8px;line-height:25.8px;font-family:'Liberation Mono', monospace;font-size:17.25px;color:#6e7681">42</div>
<div style="position:absolute;left:592px;top:836.6px;height:25.8px;line-height:25.8px;font-family:'Liberation Mono', monospace;font-size:17.25px;white-space:pre;color:#3b3b3b"><span style="color:#3b3b3b">        </span><span style="color:#001080">temperature</span></div>
<div style="position:absolute;left:500px;width:53.5px;text-align:right;top:862.4px;height:25.8px;line-height:25.8px;font-family:'Liberation Mono', monospace;font-size:17.25px;color:#6e7681">43</div>
<div style="position:absolute;left:592px;top:862.4px;height:25.8px;line-height:25.8px;font-family:'Liberation Mono', monospace;font-size:17.25px;white-space:pre;color:#3b3b3b"><span style="color:#3b3b3b">        </span><span style="color:#001080">max_output_tokens</span></div>
<div style="position:absolute;left:500px;width:53.5px;text-align:right;top:888.2px;height:25.8px;line-height:25.8px;font-family:'Liberation Mono', monospace;font-size:17.25px;color:#6e7681">44</div>
<div style="position:absolute;left:500px;width:53.5px;text-align:right;top:914.0px;height:25.8px;line-height:25.8px;font-family:'Liberation Mono', monospace;font-size:17.25px;color:#6e7681">45</div>
<div style="position:absolute;left:592px;top:914.0px;height:25.8px;line-height:25.8px;font-family:'Liberation Mono', monospace;font-size:17.25px;white-space:pre;color:#3b3b3b"><span style="color:#3b3b3b">routes = APIRouter</span><span style="color:#0431fa">(</span><span style="color:#0431fa">)</span></div>
<div style="position:absolute;left:500px;width:53.5px;text-align:right;top:939.8px;height:25.8px;line-height:25.8px;font-family:'Liberation Mono', monospace;font-size:17.25px;color:#6e7681">46</div>
<div style="position:absolute;left:592px;top:939.8px;height:25.8px;line-height:25.8px;font-family:'Liberation Mono', monospace;font-size:17.25px;white-space:pre;color:#3b3b3b"><span style="color:#3b3b3b">code_chat_model = GenerativeModel</span></div>
<div style="position:absolute;left:500px;width:53.5px;text-align:right;top:965.6px;height:25.8px;line-height:25.8px;font-family:'Liberation Mono', monospace;font-size:17.25px;color:#6e7681">47</div>
<div style="position:absolute;left:500px;width:53.5px;text-align:right;top:991.4px;height:25.8px;line-height:25.8px;font-family:'Liberation Mono', monospace;font-size:17.25px;color:#6e7681">48</div>
<div style="position:absolute;left:592px;top:991.4px;height:25.8px;line-height:25.8px;font-family:'Liberation Mono', monospace;font-size:17.25px;white-space:pre;color:#3b3b3b"><span style="color:#795e26">@routes.get</span><span style="color:#0431fa">(</span><span style="color:#a31515">&quot;/&quot;</span><span style="color:#0431fa">)</span></div>
<div style="position:absolute;left:500px;width:53.5px;text-align:right;top:1017.2px;height:25.8px;line-height:25.8px;font-family:'Liberation Mono', monospace;font-size:17.25px;color:#6e7681">49</div>
<div style="position:absolute;left:592px;top:1017.2px;height:25.8px;line-height:25.8px;font-family:'Liberation Mono', monospace;font-size:17.25px;white-space:pre;color:#3b3b3b"><span style="color:#0000ff">async</span><span style="color:#3b3b3b"> </span><span style="color:#0000ff">def</span><span style="color:#3b3b3b"> </span><span style="color:#795e26">root</span><span style="color:#0431fa">()</span><span style="color:#3b3b3b">:</span></div>
<div style="position:absolute;left:500px;width:53.5px;text-align:right;top:1043.0px;height:25.8px;line-height:25.8px;font-family:'Liberation Mono', monospace;font-size:17.25px;color:#6e7681">50</div>
<div style="position:absolute;left:592px;top:1043.0px;height:25.8px;line-height:25.8px;font-family:'Liberation Mono', monospace;font-size:17.25px;white-space:pre;color:#3b3b3b"><span style="color:#3b3b3b">    </span><span style="color:#a31515">&quot;&quot;&quot;Index endpoint&quot;&quot;&quot;</span></div>
<div style="position:absolute;left:500px;width:53.5px;text-align:right;top:1068.8px;height:25.8px;line-height:25.8px;font-family:'Liberation Mono', monospace;font-size:17.25px;color:#6e7681">51</div>
<div style="position:absolute;left:592px;top:1068.8px;height:25.8px;line-height:25.8px;font-family:'Liberation Mono', monospace;font-size:17.25px;white-space:pre;color:#3b3b3b"><span style="color:#3b3b3b">    </span><span style="color:#af00db">return</span><span style="color:#3b3b3b"> </span><span style="color:#0431fa">{</span><span style="color:#a31515">&quot;message&quot;</span></div>
<div style="position:absolute;left:500px;width:53.5px;text-align:right;top:1094.6px;height:25.8px;line-height:25.8px;font-family:'Liberation Mono', monospace;font-size:17.25px;color:#6e7681">52</div>
<div style="position:absolute;left:500px;width:53.5px;text-align:right;top:1120.4px;height:25.8px;line-height:25.8px;font-family:'Liberation Mono', monospace;font-size:17.25px;color:#6e7681">53</div>
<div style="position:absolute;left:592px;top:1120.4px;height:25.8px;line-height:25.8px;font-family:'Liberation Mono', monospace;font-size:17.25px;white-space:pre;color:#3b3b3b"><span style="color:#795e26">@routes.get</span><span style="color:#0431fa">(</span><span style="color:#a31515">&quot;/test&quot;</span></div>
<svg style="position:absolute;left:561.2px;top:908px" width="7" height="10" viewBox="0 0 7 10"><path d="M0 0 L6.2 4.9 L0 9.8 Z" fill="#f14c4c"/></svg>
<div style="position:absolute;left:787px;top:437.6px;width:454px;height:760px;background:#ffffff;border:1.3px solid #d0d0d0;border-radius:8px;box-shadow:0 3px 10px rgba(0,0,0,0.13)"></div>
<div style="position:absolute;left:788px;top:637.9px;width:452px;height:1.4px;background:#d9d9d9"></div>
<div style="position:absolute;left:788px;top:690.2px;width:452px;height:1.4px;background:#d9d9d9"></div>
<div style="position:absolute;left:788px;top:818.0px;width:452px;height:1.4px;background:#d9d9d9"></div>
<div style="position:absolute;left:788px;top:871.4px;width:452px;height:1.4px;background:#d9d9d9"></div>
<div style="position:absolute;left:788px;top:999.0px;width:452px;height:1.4px;background:#d9d9d9"></div>
<div style="position:absolute;left:788px;top:1126.2px;width:452px;height:1.4px;background:#d9d9d9"></div>
<div style="position:absolute;left:793.8px;top:1007.9px;width:441px;height:36.2px;background:#005fb8;border-radius:5px"></div>
<div style="position:absolute;left:830.6px;top:454.75px;font-family:'Liberation Sans', sans-serif;font-size:19.9px;line-height:1;height:19.9px;color:#1f1f1f;font-weight:normal;letter-spacing:-0.049px;white-space:pre;">Go to Definition</div>
<div style="position:absolute;left:830.6px;top:492.05px;font-family:'Liberation Sans', sans-serif;font-size:19.9px;line-height:1;height:19.9px;color:#1f1f1f;font-weight:normal;letter-spacing:-0.145px;white-space:pre;">Go to Declaration</div>
<div style="position:absolute;left:830.6px;top:529.25px;font-family:'Liberation Sans', sans-serif;font-size:19.9px;line-height:1;height:19.9px;color:#1f1f1f;font-weight:normal;letter-spacing:-0.104px;white-space:pre;">Go to Type Definition</div>
<div style="position:absolute;left:830.6px;top:566.55px;font-family:'Liberation Sans', sans-serif;font-size:19.9px;line-height:1;height:19.9px;color:#1f1f1f;font-weight:normal;letter-spacing:-0.423px;white-space:pre;">Go to References</div>
<div style="position:absolute;left:830.6px;top:603.75px;font-family:'Liberation Sans', sans-serif;font-size:19.9px;line-height:1;height:19.9px;color:#1f1f1f;font-weight:normal;letter-spacing:-1.097px;white-space:pre;">Peek</div>
<div style="position:absolute;left:830.6px;top:656.75px;font-family:'Liberation Sans', sans-serif;font-size:19.9px;line-height:1;height:19.9px;color:#1f1f1f;font-weight:normal;letter-spacing:-0.418px;white-space:pre;">Find All References</div>
<div style="position:absolute;left:830.6px;top:710.15px;font-family:'Liberation Sans', sans-serif;font-size:19.9px;line-height:1;height:19.9px;color:#1f1f1f;font-weight:normal;letter-spacing:-0.576px;white-space:pre;">Rename Symbol</div>
<div style="position:absolute;left:830.6px;top:747.45px;font-family:'Liberation Sans', sans-serif;font-size:19.9px;line-height:1;height:19.9px;color:#1f1f1f;font-weight:normal;letter-spacing:-0.287px;white-space:pre;">Change All Occurrences</div>
<div style="position:absolute;left:830.6px;top:784.65px;font-family:'Liberation Sans', sans-serif;font-size:19.9px;line-height:1;height:19.9px;color:#1f1f1f;font-weight:normal;letter-spacing:-0.083px;white-space:pre;">Refactor...</div>
<div style="position:absolute;left:830.6px;top:837.65px;font-family:'Liberation Sans', sans-serif;font-size:19.9px;line-height:1;height:19.9px;color:#1f1f1f;font-weight:normal;letter-spacing:-1.129px;white-space:pre;">Share</div>
<div style="position:absolute;left:830.6px;top:890.55px;font-family:'Liberation Sans', sans-serif;font-size:19.9px;line-height:1;height:19.9px;color:#1f1f1f;font-weight:normal;letter-spacing:-0.513px;white-space:pre;">Cut</div>
<div style="position:absolute;left:830.6px;top:927.75px;font-family:'Liberation Sans', sans-serif;font-size:19.9px;line-height:1;height:19.9px;color:#1f1f1f;font-weight:normal;letter-spacing:-0.463px;white-space:pre;">Copy</div>
<div style="position:absolute;left:830.6px;top:965.05px;font-family:'Liberation Sans', sans-serif;font-size:19.9px;line-height:1;height:19.9px;color:#1f1f1f;font-weight:normal;letter-spacing:-0.7px;white-space:pre;">Paste</div>
<div style="position:absolute;left:830.6px;top:1017.95px;font-family:'Liberation Sans', sans-serif;font-size:19.9px;line-height:1;height:19.9px;color:#ffffff;font-weight:normal;letter-spacing:-0.39px;white-space:pre;-webkit-text-stroke:0.3px #fff;">Gemini Code Assist</div>
<div style="position:absolute;left:830.6px;top:1055.15px;font-family:'Liberation Sans', sans-serif;font-size:19.9px;line-height:1;height:19.9px;color:#1f1f1f;font-weight:normal;letter-spacing:-0.234px;white-space:pre;">Add Version to Secret in Secret Manager...</div>
<div style="position:absolute;left:830.6px;top:1092.55px;font-family:'Liberation Sans', sans-serif;font-size:19.9px;line-height:1;height:19.9px;color:#1f1f1f;font-weight:normal;letter-spacing:-0.24px;white-space:pre;">Create Secret in Secret Manager...</div>
<svg style="position:absolute;left:1206.5px;top:603.7px" width="10" height="17" viewBox="0 0 10 17"><path d="M1.2 1 L8.2 8.5 L1.2 16" fill="none" stroke="#1f1f1f" stroke-width="1.5"/></svg>
<svg style="position:absolute;left:1206.5px;top:837.6px" width="10" height="17" viewBox="0 0 10 17"><path d="M1.2 1 L8.2 8.5 L1.2 16" fill="none" stroke="#1f1f1f" stroke-width="1.5"/></svg>
<svg style="position:absolute;left:1206.5px;top:1017.7px" width="10" height="17" viewBox="0 0 10 17"><path d="M1.2 1 L8.2 8.5 L1.2 16" fill="none" stroke="#ffffff" stroke-width="1.5"/></svg>
<div style="position:absolute;left:1167.9px;top:454.65px;font-family:'Liberation Sans', sans-serif;font-size:19.9px;line-height:1;height:19.9px;color:#1f1f1f;font-weight:normal;letter-spacing:0px;white-space:pre;">F</div>
<svg style="position:absolute;left:1178.6px;top:457.1px" width="7" height="14" viewBox="0 0 7 14"><path d="M4.6 13.1 V1.2 H4 L0.4 3.9" fill="none" stroke="#1f1f1f" stroke-width="1.7" stroke-linejoin="miter"/></svg>
<div style="position:absolute;left:1186.6px;top:454.65px;font-family:'Liberation Sans', sans-serif;font-size:19.9px;line-height:1;height:19.9px;color:#1f1f1f;font-weight:normal;letter-spacing:0px;white-space:pre;">2</div>
<svg style="position:absolute;left:1151.9px;top:456.8px" width="14" height="14" viewBox="0 0 14 14"><path d="M4.6 2.4 V11.4 M9.2 2.4 V11.4 M2.4 4.6 H11.4 M2.4 9.2 H11.4" fill="none" stroke="#1f1f1f" stroke-width="1.3"/><circle cx="2.6" cy="2.6" r="2" fill="none" stroke="#1f1f1f" stroke-width="1.3"/><circle cx="11.2" cy="2.6" r="2" fill="none" stroke="#1f1f1f" stroke-width="1.3"/><circle cx="2.6" cy="11.2" r="2" fill="none" stroke="#1f1f1f" stroke-width="1.3"/><circle cx="11.2" cy="11.2" r="2" fill="none" stroke="#1f1f1f" stroke-width="1.3"/></svg>
<div style="position:absolute;left:1167.9px;top:566.45px;font-family:'Liberation Sans', sans-serif;font-size:19.9px;line-height:1;height:19.9px;color:#1f1f1f;font-weight:normal;letter-spacing:0px;white-space:pre;">F</div>
<svg style="position:absolute;left:1178.6px;top:568.9px" width="7" height="14" viewBox="0 0 7 14"><path d="M4.6 13.1 V1.2 H4 L0.4 3.9" fill="none" stroke="#1f1f1f" stroke-width="1.7" stroke-linejoin="miter"/></svg>
<div style="position:absolute;left:1186.6px;top:566.45px;font-family:'Liberation Sans', sans-serif;font-size:19.9px;line-height:1;height:19.9px;color:#1f1f1f;font-weight:normal;letter-spacing:0px;white-space:pre;">2</div>
<svg style="position:absolute;left:1150.2px;top:568.6px" width="16" height="14" viewBox="0 0 16 14"><path d="M7.5 0.9 L14.3 7.6 H10.6 V13.1 H4.4 V7.6 H0.7 Z" fill="none" stroke="#1f1f1f" stroke-width="1.45" stroke-linejoin="miter"/></svg>
<div style="position:absolute;left:1167.9px;top:656.65px;font-family:'Liberation Sans', sans-serif;font-size:19.9px;line-height:1;height:19.9px;color:#1f1f1f;font-weight:normal;letter-spacing:0px;white-space:pre;">F</div>
<svg style="position:absolute;left:1178.6px;top:659.1px" width="7" height="14" viewBox="0 0 7 14"><path d="M4.6 13.1 V1.2 H4 L0.4 3.9" fill="none" stroke="#1f1f1f" stroke-width="1.7" stroke-linejoin="miter"/></svg>
<div style="position:absolute;left:1186.6px;top:656.65px;font-family:'Liberation Sans', sans-serif;font-size:19.9px;line-height:1;height:19.9px;color:#1f1f1f;font-weight:normal;letter-spacing:0px;white-space:pre;">2</div>
<svg style="position:absolute;left:1132.6px;top:658.8px" width="16" height="14" viewBox="0 0 16 14"><path d="M7.5 0.9 L14.3 7.6 H10.6 V13.1 H4.4 V7.6 H0.7 Z" fill="none" stroke="#1f1f1f" stroke-width="1.45" stroke-linejoin="miter"/></svg>
<svg style="position:absolute;left:1151.2px;top:658.8px" width="15" height="14" viewBox="0 0 15 14"><path d="M0 1.2 H4.3 L9.3 12.6 H14 M8.6 1.2 H14" fill="none" stroke="#1f1f1f" stroke-width="1.5"/></svg>
<div style="position:absolute;left:1176.3px;top:710.05px;font-family:'Liberation Sans', sans-serif;font-size:19.9px;line-height:1;height:19.9px;color:#1f1f1f;font-weight:normal;letter-spacing:0px;white-space:pre;">F</div>
<div style="position:absolute;left:1186.6px;top:710.05px;font-family:'Liberation Sans', sans-serif;font-size:19.9px;line-height:1;height:19.9px;color:#1f1f1f;font-weight:normal;letter-spacing:0px;white-space:pre;">2</div>
<div style="position:absolute;left:1176.3px;top:747.35px;font-family:'Liberation Sans', sans-serif;font-size:19.9px;line-height:1;height:19.9px;color:#1f1f1f;font-weight:normal;letter-spacing:0px;white-space:pre;">F</div>
<div style="position:absolute;left:1186.6px;top:747.35px;font-family:'Liberation Sans', sans-serif;font-size:19.9px;line-height:1;height:19.9px;color:#1f1f1f;font-weight:normal;letter-spacing:0px;white-space:pre;">2</div>
<svg style="position:absolute;left:1160.9px;top:749.5px" width="14" height="14" viewBox="0 0 14 14"><path d="M4.6 2.4 V11.4 M9.2 2.4 V11.4 M2.4 4.6 H11.4 M2.4 9.2 H11.4" fill="none" stroke="#1f1f1f" stroke-width="1.3"/><circle cx="2.6" cy="2.6" r="2" fill="none" stroke="#1f1f1f" stroke-width="1.3"/><circle cx="11.2" cy="2.6" r="2" fill="none" stroke="#1f1f1f" stroke-width="1.3"/><circle cx="2.6" cy="11.2" r="2" fill="none" stroke="#1f1f1f" stroke-width="1.3"/><circle cx="11.2" cy="11.2" r="2" fill="none" stroke="#1f1f1f" stroke-width="1.3"/></svg>
<div style="position:absolute;left:1185.8px;top:784.55px;font-family:'Liberation Sans', sans-serif;font-size:19.9px;line-height:1;height:19.9px;color:#1f1f1f;font-weight:normal;letter-spacing:0px;white-space:pre;">R</div>
<svg style="position:absolute;left:1153.0px;top:786.9px" width="14" height="9" viewBox="0 0 14 9"><path d="M0.8 7.6 L6.6 1.5 L12.4 7.6" fill="none" stroke="#1f1f1f" stroke-width="1.5"/></svg>
<svg style="position:absolute;left:1169.0px;top:786.7px" width="16" height="14" viewBox="0 0 16 14"><path d="M7.5 0.9 L14.3 7.6 H10.6 V13.1 H4.4 V7.6 H0.7 Z" fill="none" stroke="#1f1f1f" stroke-width="1.45" stroke-linejoin="miter"/></svg>
<div style="position:absolute;left:1240.5px;top:1001.2px;width:351px;height:139.5px;background:#ffffff;border:1.3px solid #d0d0d0;border-radius:8px;box-shadow:0 3px 10px rgba(0,0,0,0.13)"></div>
<div style="position:absolute;left:1241.5px;top:1088.8px;width:349px;height:1.4px;background:#d9d9d9"></div>
<div style="position:absolute;left:1246.3px;top:1098px;width:338.7px;height:36.5px;background:#005fb8;border-radius:5px"></div>
<div style="position:absolute;left:1283.5px;top:1017.35px;font-family:'Liberation Sans', sans-serif;font-size:19.9px;line-height:1;height:19.9px;color:#1f1f1f;font-weight:normal;letter-spacing:-0.336px;white-space:pre;">Generate code</div>
<div style="position:absolute;left:1283.5px;top:1054.05px;font-family:'Liberation Sans', sans-serif;font-size:19.9px;line-height:1;height:19.9px;color:#1f1f1f;font-weight:normal;letter-spacing:-0.173px;white-space:pre;">Generate unit tests</div>
<div style="position:absolute;left:1283.5px;top:1107.75px;font-family:'Liberation Sans', sans-serif;font-size:19.9px;line-height:1;height:19.9px;color:#ffffff;font-weight:normal;letter-spacing:-0.297px;white-space:pre;-webkit-text-stroke:0.3px #fff;">Explain this</div>
<svg style="position:absolute;left:1503.5px;top:1019.7px" width="10" height="14" viewBox="0 0 10 14"><path d="M8.6 1.1 H0.9 V12.9 H8.6 M0.9 6.9 H8.0" fill="none" stroke="#1f1f1f" stroke-width="1.7"/></svg>
<div style="position:absolute;left:1513.4px;top:1017.25px;font-family:'Liberation Sans', sans-serif;font-size:19.9px;line-height:1;height:19.9px;color:#1f1f1f;font-weight:normal;letter-spacing:0px;white-space:pre;">nter</div>
<svg style="position:absolute;left:1487.2px;top:1019.6px" width="14" height="9" viewBox="0 0 14 9"><path d="M0.8 7.6 L6.6 1.5 L12.4 7.6" fill="none" stroke="#1f1f1f" stroke-width="1.5"/></svg>
</body></html>
